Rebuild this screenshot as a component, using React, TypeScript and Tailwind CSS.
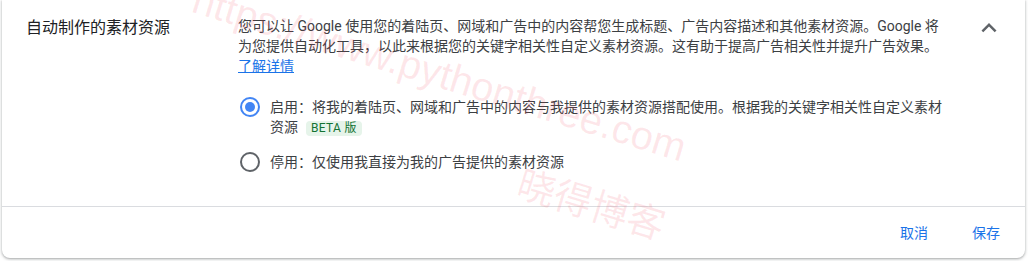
import React, { useState } from 'react';

function Radio({ checked, onClick }: { checked: boolean; onClick: () => void }) {
  return (
    <button
      type="button"
      onClick={onClick}
      className={`ml-[2px] mt-0 flex h-5 w-5 shrink-0 items-center justify-center rounded-full border-2 ${
        checked ? 'border-[#4285f4]' : 'border-[#5f6368]'
      }`}
    >
      {checked && <span className="h-[10px] w-[10px] rounded-full bg-[#4285f4]" />}
    </button>
  );
}

export default function App() {
  const [mode, setMode] = useState<'on' | 'off'>('on');

  return (
    <div className="relative h-[261px] w-[1028px] overflow-hidden bg-white font-['Roboto','Noto_Sans_CJK_SC',sans-serif]">
      <div className="ml-[2px] w-[1023px] rounded-b-lg bg-white shadow-[0_1px_2px_rgba(60,64,67,0.3),0_1px_3px_1px_rgba(60,64,67,0.15)]">
        <div className="flex pl-6 pt-4">
          <div className="w-[212px] text-base leading-6 text-[#202124]">自动制作的素材资源</div>

          <div className="w-[710px] pb-[34px]">
            <p className="text-sm leading-5 text-[#3c4043]">
              您可以让 Google 使用您的着陆页、网域和广告中的内容帮您生成标题、广告内容描述和其他素材资源。Google 将为您提供自动化工具，以此来根据您的关键字相关性自定义素材资源。这有助于提高广告相关性并提升广告效果。
            </p>
            <a href="#" className="block w-fit text-sm leading-5 text-[#1a73e8] underline">
              了解详情
            </a>

            <div className="mt-[21px] flex flex-col gap-[15px]">
              <div className="flex items-start">
                <Radio checked={mode === 'on'} onClick={() => setMode('on')} />
                <div className="ml-[10px] text-sm leading-5 text-[#3c4043]">
                  启用：将我的着陆页、网域和广告中的内容与我提供的素材资源搭配使用。根据我的关键字相关性自定义素材资源
                  <span className="ml-2 inline-block rounded-sm bg-[#e6f4ea] px-[5px] text-xs leading-[15px] tracking-wide text-[#137333]">
                    BETA 版
                  </span>
                </div>
              </div>
              <div className="flex items-start">
                <Radio checked={mode === 'off'} onClick={() => setMode('off')} />
                <div className="ml-[10px] text-sm leading-5 text-[#3c4043]">
                  停用：仅使用我直接为我的广告提供的素材资源
                </div>
              </div>
            </div>
          </div>

          <div className="flex flex-1 justify-center pl-[5px]">
            <button type="button" className="-mt-[3.5px] h-[30px] w-[30px] text-[#5f6368]">
              <svg viewBox="0 0 24 24" className="h-[30px] w-[30px]" fill="currentColor">
                <path d="M12 8l-6 6 1.41 1.41L12 10.83l4.59 4.58L18 14z" />
              </svg>
            </button>
          </div>
        </div>

        <div className="h-px bg-[#dadce0]" />

        <div className="flex h-[51px] items-center justify-end gap-3 pr-[9px]">
          <button type="button" className="px-4 text-sm text-[#1a73e8]">
            取消
          </button>
          <button type="button" className="px-4 text-sm text-[#1a73e8]">
            保存
          </button>
        </div>
      </div>

      {/* watermark */}
      <div className="pointer-events-none absolute left-[200px] top-[-21px] origin-top-left rotate-[17deg] whitespace-nowrap font-['Liberation_Sans',sans-serif] text-[40px] leading-none text-[rgba(240,60,80,0.12)]">
        https://www.pythonthree.com
      </div>
      <div className="pointer-events-none absolute left-[525px] top-[162px] origin-top-left rotate-[17deg] whitespace-nowrap font-['Noto_Sans_CJK_SC',sans-serif] text-[38px] leading-none text-[rgba(240,60,80,0.12)]">
        晓得博客
      </div>
    </div>
  );
}
